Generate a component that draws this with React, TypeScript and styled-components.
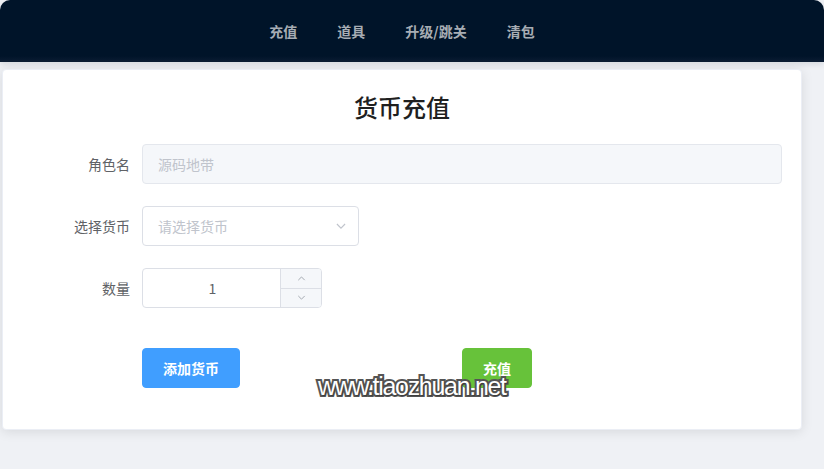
import React from "react";
import styled, { createGlobalStyle } from "styled-components";

const Global = createGlobalStyle`
  html, body { margin: 0; padding: 0; }
  body {
    background: #eff1f5;
    font-family: "Noto Sans CJK SC", "Liberation Sans", sans-serif;
    width: 824px;
    height: 469px;
    overflow: hidden;
  }
  * { box-sizing: border-box; }
`;

const Page = styled.div`
  position: relative;
  width: 824px;
  height: 469px;
`;

const Header = styled.header`
  height: 62px;
  background: linear-gradient(#001429 0, #001429 56px, #0b1c33 62px);
  border-radius: 10px 10px 0 0;
  display: flex;
  align-items: center;
  justify-content: center;
  padding-right: 20px;
  box-shadow: 0 2px 6px rgba(0, 21, 41, 0.12);
`;

const Nav = styled.nav`
  display: flex;
  gap: 40px;
`;

const NavItem = styled.a`
  font-size: 14px;
  font-weight: 700;
  color: #a7adb4;
  text-decoration: none;
  line-height: 20px;
`;

const Main = styled.main`
  padding: 7px 22px 0 2px;
`;

const Card = styled.section`
  background: #fff;
  border: 1px solid #ebeef5;
  border-radius: 4px;
  box-shadow: 0 2px 12px 0 rgba(0, 0, 0, 0.1);
  height: 361px;
  padding: 19px 19px;
`;

const Title = styled.h2`
  margin: 0;
  height: 36px;
  line-height: 36px;
  text-align: center;
  font-size: 24px;
  font-weight: 500;
  color: #1f1f1f;
`;

const Form = styled.form`
  margin-top: 19px;
  display: flex;
  flex-direction: column;
`;

const Row = styled.div`
  display: flex;
  align-items: center;
  height: 40px;
  margin-bottom: 22px;
`;

const Label = styled.label`
  width: 120px;
  padding-right: 12px;
  text-align: right;
  font-size: 14px;
  color: #606266;
`;

const TextBox = styled.div<{ $disabled?: boolean; $w?: number }>`
  position: relative;
  height: 40px;
  width: ${(p) => (p.$w ? `${p.$w}px` : "auto")};
  flex: ${(p) => (p.$w ? "none" : "1")};
  border: 1px solid ${(p) => (p.$disabled ? "#e4e7ed" : "#dcdfe6")};
  background: ${(p) => (p.$disabled ? "#f5f7fa" : "#fff")};
  border-radius: 4px;
  display: flex;
  align-items: center;
  padding: 0 15px;
  font-size: 14px;
  color: #c0c4cc;
`;

const Arrow = styled.span`
  position: absolute;
  right: 10px;
  top: 50%;
  transform: translateY(-50%);
  display: flex;
  color: #c0c4cc;
`;

const NumberBox = styled.div`
  position: relative;
  width: 180px;
  height: 40px;
  border: 1px solid #dcdfe6;
  border-radius: 4px;
  display: flex;
  overflow: hidden;
`;

const NumberValue = styled.div`
  flex: 1;
  padding-left: 17px;
  padding-right: 15px;
  display: flex;
  align-items: center;
  justify-content: center;
  font-size: 14px;
  color: #606266;
`;

const Controls = styled.div`
  width: 41px;
  border-left: 1px solid #dcdfe6;
  display: flex;
  flex-direction: column;
`;

const Ctrl = styled.div<{ $top?: boolean }>`
  flex: 1;
  background: #f5f7fa;
  display: flex;
  align-items: center;
  justify-content: center;
  color: #9ea3ab;
  border-bottom: ${(p) => (p.$top ? "1px solid #dcdfe6" : "none")};
`;

const Buttons = styled.div`
  display: flex;
  padding-left: 120px;
  margin-top: 18px;
`;

const Button = styled.button<{ $color: string; $ml?: number }>`
  height: 40px;
  padding: 0 20px;
  border: 1px solid ${(p) => p.$color};
  background: ${(p) => p.$color};
  color: #fff;
  border-radius: 4px;
  font-family: "Noto Sans CJK SC", "Liberation Sans", sans-serif;
  font-size: 14px;
  font-weight: 700;
  margin-left: ${(p) => p.$ml ?? 0}px;
  cursor: pointer;
`;

const Watermark = styled.div`
  position: absolute;
  left: 318px;
  top: 374px;
  font-family: "Liberation Sans", "DejaVu Sans", sans-serif;
  font-size: 25px;
  line-height: 25px;
  letter-spacing: -1.3px;
  color: #fff;
  pointer-events: none;
  -webkit-text-stroke: 4px #555;
  paint-order: stroke fill;
  text-shadow: 1px 1px 1px rgba(0, 0, 0, 0.3);
`;

const Chevron = ({ up, size = 12 }: { up?: boolean; size?: number }) => (
  <svg width={size} height={size} viewBox="0 0 12 12" fill="none">
    <path
      d={up ? "M2.5 7.8 L6 4.3 L9.5 7.8" : "M2.5 4.3 L6 7.8 L9.5 4.3"}
      stroke="currentColor"
      strokeWidth="1"
    />
  </svg>
);

export default function App() {
  return (
    <Page>
      <Global />
      <Header>
        <Nav>
          <NavItem>充值</NavItem>
          <NavItem>道具</NavItem>
          <NavItem>升级/跳关</NavItem>
          <NavItem>清包</NavItem>
        </Nav>
      </Header>
      <Main>
        <Card>
          <Title>货币充值</Title>
          <Form>
            <Row>
              <Label>角色名</Label>
              <TextBox $disabled>源码地带</TextBox>
            </Row>
            <Row>
              <Label>选择货币</Label>
              <TextBox $w={217}>
                请选择货币
                <Arrow>
                  <Chevron size={14} />
                </Arrow>
              </TextBox>
            </Row>
            <Row>
              <Label>数量</Label>
              <NumberBox>
                <NumberValue>1</NumberValue>
                <Controls>
                  <Ctrl $top>
                    <Chevron up size={11} />
                  </Ctrl>
                  <Ctrl>
                    <Chevron size={11} />
                  </Ctrl>
                </Controls>
              </NumberBox>
            </Row>
            <Buttons>
              <Button type="button" $color="#409eff">添加货币</Button>
              <Button type="button" $color="#67c23a" $ml={222}>充值</Button>
            </Buttons>
          </Form>
        </Card>
      </Main>
      <Watermark>www.tiaozhuan.net</Watermark>
    </Page>
  );
}
